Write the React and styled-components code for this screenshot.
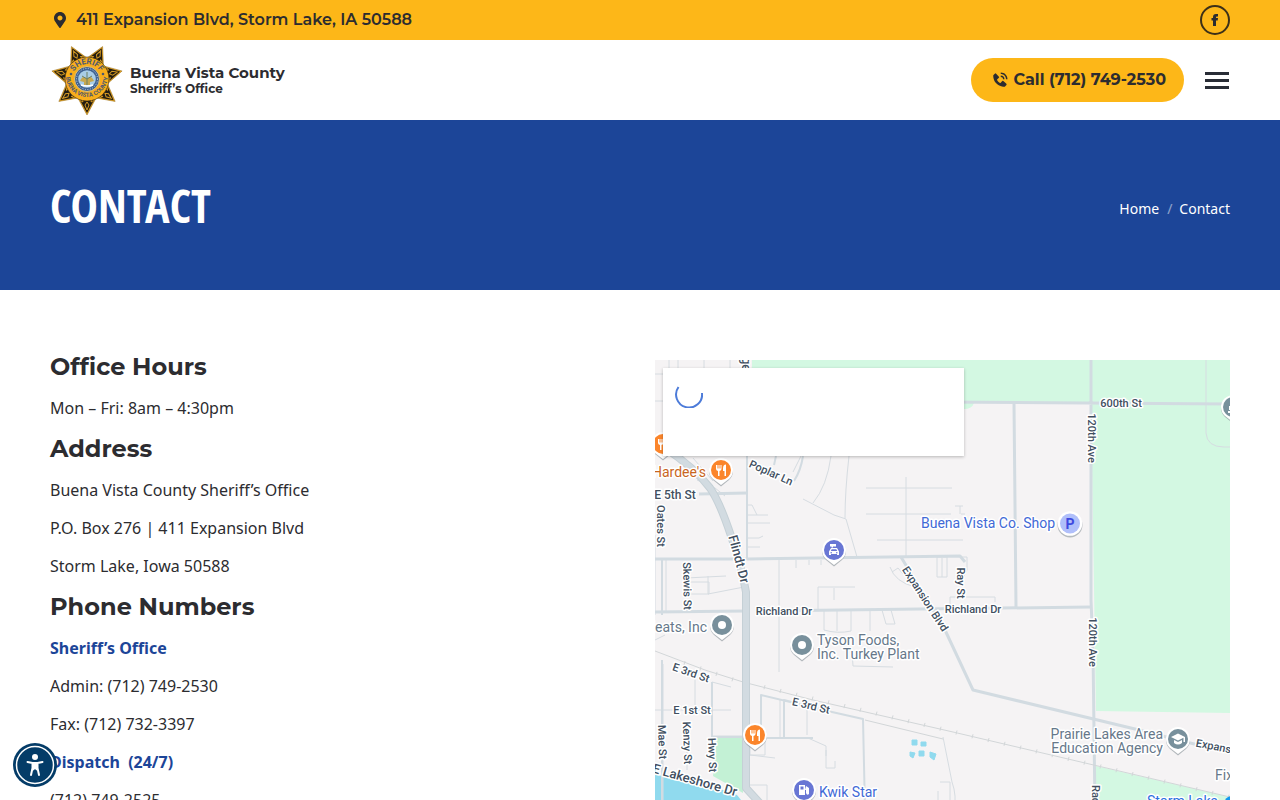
import React from "react";
import styled, { createGlobalStyle, css } from "styled-components";
import { FaMapMarkerAlt } from "react-icons/fa";
import { BiSolidPhoneCall } from "react-icons/bi";

const gold = "#fdb718";
const blue = "#1c4598";
const ink = "#2c2c30";
const display = `Montserrat, Inter, "Open Sans", sans-serif`;
const body = `"Noto Sans", "Open Sans", sans-serif`;

const GlobalStyle = createGlobalStyle`
  *, *::before, *::after { box-sizing: border-box; }
  body { margin: 0; background: #fff; color: ${ink}; font: 16px/28px ${body}; }
  h1, h2, p, ol { margin: 0; padding: 0; }
  a { color: inherit; text-decoration: none; }
  button { border: 0; padding: 0; background: none; cursor: pointer; }
`;

const bar = css`
  display: flex;
  align-items: center;
  justify-content: space-between;
  padding: 0 50px;
`;

const TopBar = styled.div`
  ${bar}
  height: 40px;
  background: ${gold};
  font: 600 16px/24px ${display};
`;

const AddressLine = styled.span`
  display: flex;
  align-items: center;
  gap: 8px;
  padding-left: 2px;
  svg { width: 16px; height: 16px; }
`;

const SocialLink = styled.a`
  display: grid;
  place-items: center;
  width: 30px;
  height: 30px;
  border: 2px solid #3d3018;
  border-radius: 50%;
  svg { width: 12px; height: 14px; }
`;

const Header = styled.header`
  ${bar}
  height: 80px;
  background: #fff;
`;

const Brand = styled.a`
  display: flex;
  align-items: center;
  gap: 6px;
`;

const BrandName = styled.span`
  display: flex;
  flex-direction: column;
  font: 700 15px/17px ${display};
  small { font-size: 12px; line-height: 15px; }
`;

const HeaderActions = styled.div`
  display: flex;
  align-items: center;
  gap: 21px;
`;

const CallButton = styled.a`
  display: flex;
  align-items: center;
  gap: 4px;
  height: 44px;
  padding: 0 18px 0 20px;
  border-radius: 22px;
  background: ${gold};
  font: 700 16px/24px ${display};
  svg { width: 18px; height: 18px; }
`;

const MenuButton = styled.button`
  display: flex;
  flex-direction: column;
  gap: 4px;
  margin-right: 1px;
  span { width: 24px; height: 3px; background: #292d36; }
`;

const Banner = styled.section`
  ${bar}
  height: 170px;
  background: ${blue};
  color: #fff;
`;

const Title = styled.h1`
  font: 700 46px/58px "Open Sans Condensed", "Noto Sans Condensed", "Liberation Sans Narrow", sans-serif;
  text-transform: uppercase;
`;

const Crumbs = styled.ol`
  display: flex;
  gap: 8px;
  padding-top: 8px;
  list-style: none;
  font-size: 14px;
  line-height: 24px;
  li + li::before { content: "/"; margin-right: 7px; opacity: 0.5; }
`;

const Main = styled.main`
  display: grid;
  grid-template-columns: 1fr 1fr;
  gap: 30px;
  padding: 60px 50px;
`;

const Details = styled.section`
  display: flex;
  flex-direction: column;
  gap: 10px;
`;

const Heading = styled.h2`
  font: 700 24px/34px ${display};
`;

const Accent = styled.p`
  color: ${blue};
  font-weight: 700;
  white-space: pre-wrap;
`;

const MapFrame = styled.section`
  position: relative;
  height: 450px;
  margin-top: 10px;
  overflow: hidden;
  background: #f5f3f4;
  > svg { display: block; width: 100%; height: 100%; }
`;

const MapCard = styled.div`
  position: absolute;
  top: 8px;
  left: 8px;
  width: 301px;
  height: 88px;
  padding: 12px;
  background: #fff;
  box-shadow: 0 1px 3px rgba(0, 0, 0, 0.25);
`;

const AccessButton = styled.button`
  position: fixed;
  left: 13px;
  bottom: 13px;
  width: 44px;
  height: 44px;
  svg { display: block; }
`;

const Minor = styled.path`
  fill: none;
  stroke: #d6dce1;
  stroke-width: ${(p) => p.$w || 1};
`;

const Road = styled.path`
  fill: none;
  stroke: ${(p) => p.$color || "#d2dbe1"};
  stroke-width: ${(p) => p.$w || 3};
  stroke-linejoin: round;
`;

const Label = styled.text`
  font-family: Roboto, sans-serif;
  font-size: ${(p) => p.$size || 11}px;
  font-weight: ${(p) => (p.$poi ? 400 : 500)};
  fill: ${(p) => p.$color || "#414f5f"};
  stroke: #fff;
  stroke-width: 3px;
  stroke-linejoin: round;
  paint-order: stroke;
  text-anchor: ${(p) => p.$anchor || "middle"};
  dominant-baseline: central;
`;

const BadgeText = styled.text`
  font: 700 ${(p) => p.$size}px Roboto, sans-serif;
  fill: #4c5870;
  text-anchor: middle;
`;

const ring = (n, radius, cx, cy, start) =>
  Array.from({ length: n }, (_, i) => {
    const a = ((start + (i * 360) / n) * Math.PI) / 180;
    return [cx + radius * Math.cos(a), cy + radius * Math.sin(a)];
  });

const star = (outer, inner) => {
  const tips = ring(7, outer, 37, 36, 90);
  const dips = ring(7, inner, 37, 36, 90 + 180 / 7);
  return tips.map((t, i) => `${t.join()} ${dips[i].join()}`).join(" ");
};

function SheriffStar() {
  return (
    <svg width="74" height="74" viewBox="0 0 74 74" role="img" aria-label="Sheriff star">
      <defs>
        <path id="arc-top" d="M22 36a15 15 0 0 1 30 0" />
        <path id="arc-bottom" d="M16 33a21 21 0 0 0 42 0" />
      </defs>
      <polygon points={star(36, 21)} fill="#e9a51c" stroke="#8d6414" strokeWidth=".5" />
      <polygon points={star(34, 20)} fill="#231d12" />
      {ring(7, 27, 37, 36, 90).map(([x, y], i) => (
        <g key={i} transform={`rotate(${(i * 360) / 7} 37 36)`}>
          <path d="M37 67l-2-5 2-3 2 3zM33 59q-3-1-4-4 4 0 4 4zM41 59q3-1 4-4-4 0-4 4z" fill="none" stroke="#d49a24" strokeWidth="1" />
        </g>
      ))}
      <circle cx="37" cy="36" r="22" fill="#f9ae1b" stroke="#3a2c12" strokeWidth=".6" />
      <BadgeText $size={8}><textPath href="#arc-top" startOffset="50%">SHERIFF</textPath></BadgeText>
      <BadgeText $size={6}><textPath href="#arc-bottom" startOffset="50%">BUENA VISTA COUNTY</textPath></BadgeText>
      <circle cx="21" cy="31" r="1.3" fill="#4c5870" />
      <circle cx="53" cy="31" r="1.3" fill="#4c5870" />
      <circle cx="37" cy="36" r="12.5" fill="#3f6292" stroke="#e4c473" />
      <circle cx="37" cy="36" r="10.5" fill="none" stroke="#c8d4de" strokeWidth="1" strokeDasharray="1 1.5" />
      <circle cx="37" cy="36" r="8.8" fill="#a9cde6" />
      <path d="M30 38q3-7 7-2 4-5 7 2l-4 1v3h-6v-3z" fill="#c7a84f" />
      <path d="M37 29v13M32 33l5 3 5-3" stroke="#6d7f61" fill="none" />
      <path d="M31 42q6 2 12 0" stroke="#fff" strokeWidth="1.5" fill="none" />
    </svg>
  );
}

function Pin({ x, y, color, children }) {
  return (
    <g transform={`translate(${x} ${y})`}>
      <path d="M0 15.500L-8 9A12 12 0 1 1 8 9Z" fill="#8d979c" opacity=".65" transform="translate(0 1)" />
      <path d="M0 15L-8.500 8.500A12 12 0 1 1 8.500 8.500Z" fill="#fff" />
      <circle r="10" fill={color} />
      {children}
    </g>
  );
}

const Fork = () => (
  <path d="M-5-5v4q0 1.500 2 2v5h1.500v-5q2-.5 2-2v-4h-1v3.500h-1V-5h-1v3.500h-1V-5zM5-5.500q-3 0-3 4V1h1.500v5H5z" fill="#fff" />
);
const Dot = () => <circle r="4" fill="#fff" />;
const Cap = () => (
  <path d="M0-5.500L-7-2 0 1.500 5.500-1.200V3H7v-5zM-4 1v3q4 3 8 0V1L0 3z" fill="#fff" />
);

const slate = "#78909c";
const indigo = "#6876d4";
const poiGrey = "#66788a";
const poiBlue = "#4169d6";

const minorRoads = [
  "M669 360v8M678 360v96M704 360v8M730 360v8M655 374h8M655 401h8",
  "M801 456l-8 16M831 456q-4 30-18 47M849 456q-4 35-4 62M803 499l31 16 12 4 11 38",
  "M748 505h4l5 10M748 515h20M748 523h22M748 538h11l4-2M748 547h12",
  "M866 488h86M866 514h85M877 540h86M906 477v80M955 506h8M960 506v8M961 514h4",
  "M796 560v8M809 560v5M821 560v5M937 577v-20h10v20zM942 558v19M960 557h7v13l-5 10",
  "M779 558v114M655 535v80M666 558v54M686 578l40-2M687 582h22v12h-22M708 576v18l36-7",
  "M818 609v-22h37M834 588v12M824 610v20q14 4 27 1v-22M837 611v20M870 610v21M882 610l4 14h9l-4-14",
  "M865 651q-15 2-12 15l40 1M890 567q5 15 25 20M892 572l6-4 5 6M950 605v-8h45v5",
  "M655 640l10-5M663 664v145M695 679v34M712 682l19 5M687 727v43M655 710h76M712 682v54M712 736h30",
  "M750 737v18h15v-18M750 755l25 3M826 750v18h9v-7M808 738l18 8v10M943 737l9 45q5 14 2 28",
  "M1206 360v73q1 14 18 14h6M940 782h10v28M750 785l17 0v18l-17-8M938 791v18",
  "M780 700v38M807 705v30M693 458l20 23M697 480l18 8 10 8",
];

const mainRoads = [
  "M747 360v198M776 456l-2 9M803 456q-2 14-9 25",
  "M655 559h93l212-3 5 6M699 494l48-1",
  "M940 402l290 2M1014 403l2 204M1091 360v240l2 50 2 160",
  "M655 612l90-1M755 611l336-4M901 557l44 73 28 60 162 39 95 24",
  "M761 737v-42l71 17 31 7 2 91M807 706l-23-6v38M762 738h51",
  "M662 560v55M662 660v150M712 682v55h31",
];

const ticks = Array.from({ length: 35 }, (_, i) => {
  const x = 685 + i * 16;
  const y = x < 743 ? 663 + (x - 685) * 0.34 : 682 + (x - 743) * 0.236;
  return `M${x} ${y - 2}l-1 4`;
}).join("");

const highway = "M665 448q30 20 45 40 14 20 32 84l4 20v196l22 24";

function CityMap() {
  return (
    <svg viewBox="655 360 575 450" preserveAspectRatio="xMinYMin slice" role="img" aria-label="Map of Storm Lake">
      <path d="M752 360h478v353l-134-2-5-308H974q-2 6-10 6h-12V403H752z" fill="#d3f8e2" />
      <path d="M1096 766l134 31v13H1096z" fill="#d3f8e2" />
      <path d="M717 737h26v56l-30-17z" fill="#c3f1d5" />
      <path d="M655 775q40 3 82 20l12 15h-94z" fill="#90daee" />
      {minorRoads.map((d) => <Minor key={d} d={d} />)}
      {mainRoads.map((d, i) => <Road key={d} d={d} $w={i === 0 || i === 4 || i === 5 ? 2 : 3} />)}
      <path d="M655 651l50 19 38 12 70 18 140 32 277 65M865 720l78 19" fill="none" stroke="#d2d6d8" />
      <path d={ticks} stroke="#d2d6d8" />
      <Road $w={8} d={highway} $color="#c5d0d6" />
      <Road $w={6} d={highway} />
      <path d="M912 740h5v5h-5zM921 742h5v4h-5zM910 752l5 1-2 5-3-2zM919 751h5v5h-5zM930 752l6 2-2 6-4-3z" fill="#90daee" stroke="#90daee" />

      <Label transform="translate(746 364) rotate(90)" $size={12}>ge</Label>
      <Label x="1121" y="403">600th St</Label>
      <Label transform="translate(1091 438) rotate(90)">120th Ave</Label>
      <Label transform="translate(1092 642) rotate(90)">120th Ave</Label>
      <Label transform="translate(771 473) rotate(24)">Poplar Ln</Label>
      <Label x="675" y="495" $size={12}>E 5th St</Label>
      <Label transform="translate(660 526) rotate(90)">Oates St</Label>
      <Label transform="translate(739 559) rotate(75)" $size={13}>Flindt Dr</Label>
      <Label transform="translate(687 586) rotate(89)">Skewis St</Label>
      <Label transform="translate(925 599) rotate(57)">Expansion Blvd</Label>
      <Label transform="translate(960 583) rotate(90)">Ray St</Label>
      <Label x="784" y="611">Richland Dr</Label>
      <Label x="973" y="609">Richland Dr</Label>
      <Label transform="translate(691 673) rotate(19)">E 3rd St</Label>
      <Label transform="translate(811 706) rotate(13)">E 3rd St</Label>
      <Label x="692" y="710">E 1st St</Label>
      <Label transform="translate(662 742) rotate(88)">Mae St</Label>
      <Label transform="translate(687 743) rotate(88)">Kenzy St</Label>
      <Label transform="translate(712 755) rotate(88)">Hwy St</Label>
      <Label transform="translate(695 780) rotate(16)" $size={13}>E Lakeshore Dr</Label>
      <Label transform="translate(1196 743) rotate(11)" $anchor="start">Expansion</Label>
      <Label transform="translate(1095 785) rotate(90)" $anchor="start">Radio Rd</Label>

      <Label $poi $size={14} $color="#c9661e" $anchor="end" x="706" y="472">Hardee's</Label>
      <Label $poi $size={14} $color={poiBlue} $anchor="end" x="1055" y="523">Buena Vista Co. Shop</Label>
      <Label $poi $size={14} $color={poiGrey} $anchor="end" x="707" y="627">Meats, Inc</Label>
      <Label $poi $size={14} $color={poiGrey} $anchor="start" x="817" y="640">Tyson Foods,</Label>
      <Label $poi $size={14} $color={poiGrey} $anchor="start" x="817" y="654">Inc. Turkey Plant</Label>
      <Label $poi $size={14} $color={poiGrey} $anchor="end" x="1163" y="734">Prairie Lakes Area</Label>
      <Label $poi $size={14} $color={poiGrey} $anchor="end" x="1163" y="748">Education Agency</Label>
      <Label $poi $size={14} $color={poiBlue} $anchor="start" x="819" y="792">Kwik Star</Label>
      <Label $poi $size={14} $color={poiGrey} $anchor="start" x="1215" y="775">Fix</Label>
      <Label $size={14} $color="#2d6fe0" $poi $anchor="start" x="1147" y="801">Storm Lake</Label>

      <Pin x={663} y={444} color="#fb852b"><Fork /></Pin>
      <Pin x={721} y={470} color="#fb852b"><Fork /></Pin>
      <Pin x={755} y={735} color="#fb852b"><Fork /></Pin>
      <Pin x={722} y={625} color={slate}><Dot /></Pin>
      <Pin x={802} y={645} color={slate}><Dot /></Pin>
      <Pin x={1178} y={739} color={slate}><Cap /></Pin>
      <Pin x={1233} y={407} color={slate}><path d="M-5 4h10v2H-5zM-4-1h8v4h-8z" fill="#fff" /></Pin>
      <Pin x={834} y={550} color={indigo}>
        <path d="M-4-6h6v2.500h-3v1h-1.500v-1H-4zM-3-2h6l2 3.500V5H3V4h-6v1h-2V1.500z" fill="#fff" />
        <path d="M-2.300-.8h4.600l.9 1.800h-6.400z" fill={indigo} />
        <circle cx="-2.800" cy="2.700" r=".8" fill={indigo} />
        <circle cx="2.800" cy="2.700" r=".8" fill={indigo} />
      </Pin>
      <Pin x={804} y={790} color={indigo}>
        <path d="M-5-5h6v10h-6zM2-4l3 2v6q-2 2-3-1V0H1" fill="#fff" />
        <path d="M-3.500-3.500h3v3h-3z" fill={indigo} />
      </Pin>
      <circle cx="1070" cy="525" r="12.500" fill="#9aa3a8" opacity=".7" />
      <circle cx="1070" cy="523.500" r="12.300" fill="#fff" />
      <circle cx="1070" cy="523.500" r="10" fill="#b0bffa" />
      <text x="1070" y="528.500" textAnchor="middle" fontFamily="Roboto, sans-serif" fontSize="14" fontWeight="700" fill="#3d49e0">P</text>
      <circle cx="1232" cy="804" r="8" fill="#1397ef" />
    </svg>
  );
}

export default function App() {
  return (
    <>
      <GlobalStyle />
      <TopBar>
        <AddressLine><FaMapMarkerAlt />411 Expansion Blvd, Storm Lake, IA 50588</AddressLine>
        <SocialLink href="#facebook" aria-label="Facebook">
          <svg viewBox="0 0 12 14" aria-hidden="true">
            <path d="M4 13V7.500H2.500V5H4V4q0-3 3-3h2v2.400H7.800q-.8 0-.8.900V5h2l-.3 2.500H7V13z" fill="currentColor" />
          </svg>
        </SocialLink>
      </TopBar>
      <Header>
        <Brand href="#home">
          <SheriffStar />
          <BrandName>Buena Vista County<small>Sheriff’s Office</small></BrandName>
        </Brand>
        <HeaderActions>
          <CallButton href="tel:7127492530"><BiSolidPhoneCall />Call (712) 749-2530</CallButton>
          <MenuButton aria-label="Menu"><span /><span /><span /></MenuButton>
        </HeaderActions>
      </Header>
      <Banner>
        <Title>Contact</Title>
        <nav aria-label="Breadcrumb">
          <Crumbs>
            <li><a href="#home">Home</a></li>
            <li>Contact</li>
          </Crumbs>
        </nav>
      </Banner>
      <Main>
        <Details>
          <Heading>Office Hours</Heading>
          <p>Mon – Fri: 8am – 4:30pm</p>
          <Heading>Address</Heading>
          <p>Buena Vista County Sheriff’s Office</p>
          <p>P.O. Box 276 | 411 Expansion Blvd</p>
          <p>Storm Lake, Iowa 50588</p>
          <Heading>Phone Numbers</Heading>
          <Accent>Sheriff’s Office</Accent>
          <p>Admin: (712) 749-2530</p>
          <p>Fax: (712) 732-3397</p>
          <Accent>{"Dispatch  (24/7)"}</Accent>
          <p>(712) 749-2525</p>
        </Details>
        <MapFrame>
          <CityMap />
          <MapCard>
            <svg width="28" height="28" viewBox="0 0 28 28" role="img" aria-label="Loading">
              <path d="M3.500 7A13 13 0 1 0 27 13" fill="none" stroke="#4c7bd9" strokeWidth="2" />
            </svg>
          </MapCard>
        </MapFrame>
      </Main>
      <AccessButton aria-label="Accessibility options">
        <svg width="44" height="44" viewBox="0 0 44 44">
          <circle cx="22" cy="22" r="22" fill="#043c68" />
          <circle cx="22" cy="22" r="18.500" fill="none" stroke="#fff" strokeWidth="1.500" />
          <circle cx="22" cy="14" r="3" fill="#fff" />
          <path d="M14.500 19l5 1v5l-1.500 7M29.500 19l-5 1v5l1.500 7" fill="none" stroke="#fff" strokeWidth="2" strokeLinecap="round" strokeLinejoin="round" />
          <path d="M19 19h6v7l-1.500 1.500-1.500-1.500-1.500 1.500-1.500-1.500z" fill="#fff" />
        </svg>
      </AccessButton>
    </>
  );
}
